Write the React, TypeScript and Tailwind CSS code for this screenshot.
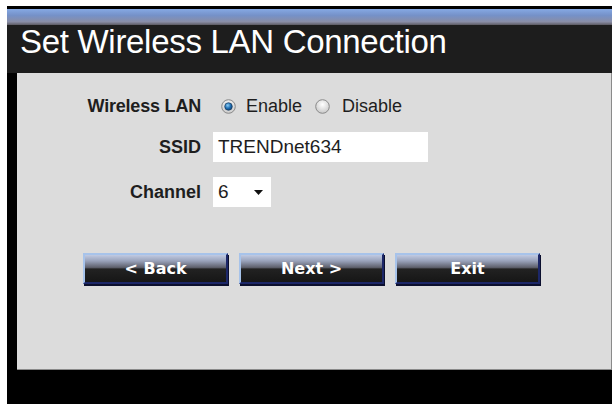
import React from "react";

const sans = "font-['Liberation_Sans',Arial,sans-serif]";

function Radio({ checked }: { checked?: boolean }) {
  return (
    <svg width="15" height="15" viewBox="0 0 15 15" className="shrink-0">
      <defs>
        <radialGradient id={checked ? "rbgOn" : "rbgOff"} cx="50%" cy="35%" r="65%">
          <stop offset="0%" stopColor="#ffffff" />
          <stop offset="100%" stopColor="#c8c8c8" />
        </radialGradient>
        <radialGradient id="dot" cx="40%" cy="35%" r="70%">
          <stop offset="0%" stopColor="#8ccdf5" />
          <stop offset="55%" stopColor="#1f6fb3" />
          <stop offset="100%" stopColor="#0d3f70" />
        </radialGradient>
      </defs>
      <circle cx="7.5" cy="7.5" r="6.8" fill={`url(#${checked ? "rbgOn" : "rbgOff"})`} stroke="#8a8a8a" strokeWidth="1" />
      {checked ? <circle cx="7.5" cy="7.5" r="3.8" fill="url(#dot)" stroke="#1c3b5c" strokeWidth="0.7" /> : null}
    </svg>
  );
}

function WizardButton({ label }: { label: string }) {
  return (
    <button
      type="button"
      className="h-[31px] w-[145px] border-t-2 border-l-2 border-r-2 border-b-2 border-t-[#a7c3ea] border-l-[#a7c3ea] border-r-[#1c2768] border-b-[#1c2768] bg-[linear-gradient(to_bottom,#c0cae2_0%,#99a2ba_22%,#5e606c_46%,#222222_52%,#161616_100%)] font-['DejaVu_Sans',Verdana,sans-serif] text-[16px] font-bold leading-none text-white shadow-[1px_2px_0_#0b0f2e]"
    >
      {label}
    </button>
  );
}

export default function App() {
  return (
    <div className="h-[404px] w-[612px] overflow-hidden bg-white pl-[7px] pt-[6px]">
      <div className="flex h-[398px] w-[605px] flex-col bg-black pt-[3px]">
        <div className="h-[16px] bg-[linear-gradient(to_bottom,#86a9e4_0%,#7591c8_40%,#8a8ea6_80%,#5c5a62_100%)]" />
        <div className="h-[48px] bg-[#1d1d1d] pl-[13px]">
          <h1 className={`${sans} text-[33px] leading-[34px] tracking-[-0.3px] text-white`}>Set Wireless LAN Connection</h1>
        </div>
        <div className="ml-[10px] h-[297px] border-r border-b border-[#8a8a8a] bg-[#dcdcdc] pt-[18px]">
          <div className={`${sans} flex flex-col text-[18px] text-[#1e1e1e]`}>
            <div className="flex h-[30px] items-center">
              <span className="w-[184px] text-right text-[18px] font-bold tracking-[-0.2px]">Wireless LAN</span>
              <div className="ml-[20px] flex items-center">
                <Radio checked />
                <span className="ml-[10px]">Enable</span>
                <span className="ml-[13px]">
                  <Radio />
                </span>
                <span className="ml-[12px]">Disable</span>
              </div>
            </div>
            <div className="mt-[11px] flex h-[30px] items-center">
              <span className="w-[184px] text-right text-[18px] font-bold">SSID</span>
              <div className="ml-[12px] flex h-[30px] w-[215px] items-center bg-white pl-[5px] text-[19px]">TRENDnet634</div>
            </div>
            <div className="mt-[15px] flex h-[30px] items-center">
              <span className="w-[184px] text-right text-[18px] font-bold">Channel</span>
              <div className="ml-[12px] flex h-[30px] w-[58px] items-center bg-white pl-[5px] text-[19px]">
                <span>6</span>
                <svg width="9" height="5" viewBox="0 0 9 5" className="ml-[25px]">
                  <path d="M0 0H9L4.5 5Z" fill="#111" />
                </svg>
              </div>
            </div>
          </div>
          <div className="ml-[66px] mt-[46px] flex gap-[11px]">
            <WizardButton label="< Back" />
            <WizardButton label="Next >" />
            <WizardButton label="Exit" />
          </div>
        </div>
      </div>
    </div>
  );
}
